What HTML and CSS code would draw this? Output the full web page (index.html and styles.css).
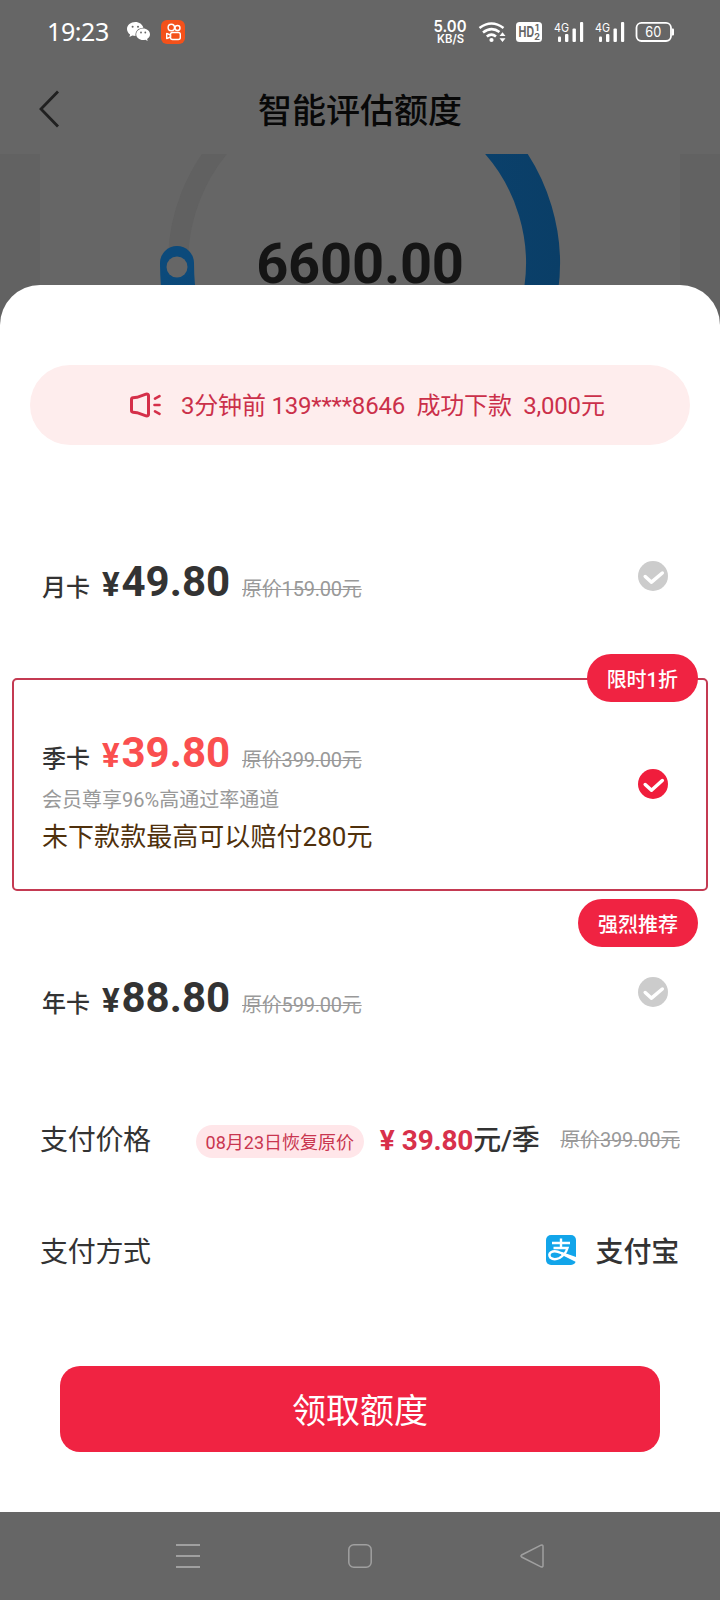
FILE: index.html
```html
<!DOCTYPE html>
<html lang="zh-CN">
<head>
<meta charset="utf-8">
<title>智能评估额度</title>
<link rel="stylesheet" href="styles.css">
</head>
<body>
<div class="screen">
  <header class="status">
    <span class="clock">19:23</span>
    <svg class="wechat" width="24" height="20" viewBox="0 0 24 20">
      <path fill="#fff" d="M8.300 0C3.700 0 0 3.100 0 7c0 2.200 1.200 4.200 3.100 5.500L2.400 15l3-1.500c1 .3 2 .4 3.100.4C8 9 11.500 5.800 16.400 5.700 15.500 2.400 12.200 0 8.300 0z"/>
      <path fill="#fff" d="M23 12.200c0-3.200-3.100-5.800-6.900-5.800s-6.900 2.600-6.900 5.800 3.100 5.800 6.900 5.800c.8 0 1.600-.1 2.300-.3l2.300 1.300-.6-2.100c1.800-1.100 2.900-2.800 2.900-4.700z"/>
      <g fill="#666"><circle cx="5.600" cy="4.800" r="1"/><circle cx="11" cy="4.800" r="1"/><circle cx="14" cy="10.500" r=".9"/><circle cx="18.300" cy="10.500" r=".9"/></g>
    </svg>
    <svg class="kuaishou" width="24" height="24" viewBox="0 0 24 24">
      <rect width="24" height="24" rx="6" fill="#f4511a"/>
      <g fill="none" stroke="#fff" stroke-width="1.400" stroke-linejoin="round"><circle cx="10.300" cy="7.500" r="3.200"/><circle cx="16.500" cy="8" r="2.500"/><rect x="9.500" y="12.500" width="9.800" height="7" rx="2"/><path d="M9.500 15l-3.800-1.600v5.200L9.500 17z"/></g>
    </svg>
    <svg class="signals" width="250" height="30" viewBox="430 16 250 30">
      <g fill="#fff">
        <g class="speed"><text x="433.500" y="32" font-size="16" textLength="33" lengthAdjust="spacingAndGlyphs">5.00</text><text x="437" y="43.300" font-size="12" textLength="27" lengthAdjust="spacingAndGlyphs">KB/S</text></g>
        <g fill="none" stroke="#fff" stroke-width="2.600"><path d="M479.500 28Q491.500 19 503.500 28"/><path d="M483 32.500Q491.500 26 499.500 32"/><path d="M486.800 36.500Q491.500 32.700 496 36.500"/></g>
        <circle cx="491.500" cy="40" r="2.100"/>
        <path d="M499.500 36l3-3.800 3 3.800zM499.500 38.200l3 3.800 3-3.800z"/>
        <rect x="516" y="22" width="26" height="20" rx="3.500"/>
        <g class="hd" fill="#666"><text x="518.500" y="37.300" font-size="14.500" textLength="15.500" lengthAdjust="spacingAndGlyphs">HD</text><text x="535" y="31.300" font-size="9">1</text><text x="534.200" y="39.500" font-size="9">2</text></g>
        <text class="net" x="554" y="31.500" font-size="12" textLength="15" lengthAdjust="spacingAndGlyphs">4G</text>
        <rect x="558" y="36.500" width="3" height="5.500" rx="1"/><rect x="565" y="34" width="3.400" height="8" rx="1"/><rect x="572.500" y="28.500" width="3.400" height="13.500" rx="1"/><rect x="580" y="22" width="3.200" height="20" rx="1"/>
        <text class="net" x="595" y="31.500" font-size="12" textLength="15" lengthAdjust="spacingAndGlyphs">4G</text>
        <rect x="599" y="36.500" width="3" height="5.500" rx="1"/><rect x="606" y="34" width="3.400" height="8" rx="1"/><rect x="613.500" y="28.500" width="3.400" height="13.500" rx="1"/><rect x="621" y="22" width="3.200" height="20" rx="1"/>
        <rect x="636.500" y="22.800" width="34.500" height="18.200" rx="5" fill="none" stroke="#fff" stroke-width="1.800"/>
        <path d="M672 28.500h1q1 0 1 1v5q0 1-1 1h-1z"/>
        <text class="net" x="645.300" y="37" font-size="14" textLength="16" lengthAdjust="spacingAndGlyphs">60</text>
      </g>
    </svg>
  </header>

  <nav class="titlebar">
    <svg class="back" width="24" height="40" viewBox="0 0 24 40"><path d="M20 2.500L3 20 20 37.500" fill="none" stroke="#202020" stroke-width="2.800"/></svg>
    <h1 class="title">智能评估额度</h1>
  </nav>

  <section class="backdrop">
    <div class="gauge-card">
      <svg class="gauge" width="640" height="171" viewBox="40 154 640 171">
        <defs><linearGradient id="arc" gradientUnits="userSpaceOnUse" x1="160" y1="0" x2="560" y2="0"><stop offset="0" stop-color="#0c4a7b"/><stop offset="1" stop-color="#0a3e67"/></linearGradient></defs>
        <circle cx="360" cy="263" r="182" fill="none" stroke="#616161" stroke-width="20"/>
        <path d="M480 125A183 183 0 0 1 536 313" fill="none" stroke="url(#arc)" stroke-width="34"/>
        <path d="M177 263Q177 285 181 310" fill="none" stroke="url(#arc)" stroke-width="34"/>
        <circle cx="177" cy="263" r="17" fill="#0c4a7b"/>
        <circle cx="177" cy="267" r="10.500" fill="#666"/>
      </svg>
      <div class="amount">6600.00</div>
    </div>
  </section>

  <main class="sheet">
    <div class="notice">
      <svg width="34" height="28" viewBox="0 0 34 28"><g fill="none" stroke="#d52f49" stroke-width="3" stroke-linecap="round" stroke-linejoin="round"><path d="M3.500 8.500Q3.500 7 5 6.800L9 6.300L18 3.200Q20.500 2.700 20.500 4.500V23.500Q20.500 25.300 18 24.800L9 21.700L5 21.200Q3.500 21 3.500 19.500Z"/><path stroke-width="2.600" d="M27 7.600l4.500-2.500M26.500 14h5M27 20.400l4.500 2.500"/></g></svg>
      <span class="notice-text">3分钟前 139****8646&nbsp; 成功下款&nbsp; 3,000元</span>
    </div>

    <div class="plans">
      <div class="plan">
        <div class="info"><div class="line"><span class="name">月卡</span><span class="price"><small>¥</small>49.80</span><s class="old">原价159.00元</s></div></div>
        <svg class="check" width="30" height="30" viewBox="0 0 30 30"><circle cx="15" cy="15" r="15" fill="#ccc"/><path d="M7.200 15.500l6.300 5.700L24.300 12" fill="none" stroke="#fff" stroke-width="3.500" stroke-linecap="round" stroke-linejoin="round"/></svg>
      </div>
      <div class="plan selected">
        <span class="badge">限时1折</span>
        <div class="info">
          <div class="line"><span class="name">季卡</span><span class="price"><small>¥</small>39.80</span><s class="old">原价399.00元</s></div>
          <div class="desc">会员尊享96%高通过率通道</div>
          <div class="promise">未下款款最高可以赔付280元</div>
        </div>
        <svg class="check" width="30" height="30" viewBox="0 0 30 30"><circle cx="15" cy="15" r="15" fill="#f01d3c"/><path d="M7.200 15.500l6.300 5.700L24.300 11.500" fill="none" stroke="#fff" stroke-width="3.500" stroke-linecap="round" stroke-linejoin="round"/></svg>
      </div>
      <div class="plan">
        <span class="badge">强烈推荐</span>
        <div class="info"><div class="line"><span class="name">年卡</span><span class="price"><small>¥</small>88.80</span><s class="old">原价599.00元</s></div></div>
        <svg class="check" width="30" height="30" viewBox="0 0 30 30"><circle cx="15" cy="15" r="15" fill="#ccc"/><path d="M7.200 15.500l6.300 5.700L24.300 12" fill="none" stroke="#fff" stroke-width="3.500" stroke-linecap="round" stroke-linejoin="round"/></svg>
      </div>
    </div>

    <div class="row pay-price">
      <span class="row-label">支付价格</span>
      <span class="restore">08月23日恢复原价</span>
      <span class="total"><b><i>¥</i>39.80</b>元/季</span>
      <s class="old">原价399.00元</s>
    </div>
    <div class="row pay-method">
      <span class="row-label">支付方式</span>
      <svg class="alipay" width="30" height="30" viewBox="0 0 30 30">
        <rect width="30" height="30" rx="5" fill="#12a5ea"/>
        <path d="M6 8h18M15 3.500v9.500M7.500 13h14Q19.500 19.500 13.500 23Q8 25.500 4.500 22.800Q2 19.500 5 17.200Q9 15 15 18L29.500 24" fill="none" stroke="#fff" stroke-width="2.400"/>
        <path d="M15 16.800L30 22v5L15 19.500z" fill="#fff"/>
      </svg>
      <span class="method">支付宝</span>
    </div>
    <button class="submit">领取额度</button>
  </main>

  <footer class="navkeys">
    <svg width="26" height="26" viewBox="0 0 26 26"><path d="M1 2h24M1 13h24M1 24h24" stroke="#a0a0a0" stroke-width="1.800"/></svg>
    <svg width="26" height="26" viewBox="0 0 26 26"><rect x="1.800" y="1.800" width="22.400" height="22.400" rx="5" fill="none" stroke="#a0a0a0" stroke-width="1.500"/></svg>
    <svg width="26" height="26" viewBox="0 0 26 26"><path d="M22 2.200L2.600 12q-1.300 1 0 2L22 23.800q2 .6 2-1.300V3.500q0-1.900-2-1.300z" fill="none" stroke="#a0a0a0" stroke-width="1.500"/></svg>
  </footer>
</div>
</body>
</html>
```

FILE: styles.css
```css
* { box-sizing: border-box; }
body { margin: 0; font-family: Roboto, "Noto Sans CJK SC", sans-serif; color: #333; }
svg { display: block; flex: none; }
.screen { width: 720px; height: 1600px; background: #666; display: flex; flex-direction: column; overflow: hidden; }

.status { height: 64px; display: flex; align-items: center; padding-left: 47px; flex: none; }
.clock { font: 25px/30px "Noto Sans", sans-serif; letter-spacing: -0.4px; color: #fff; width: 80px; padding-bottom: 2px; white-space: nowrap; }
.kuaishou { margin-left: 10px; }
.signals { margin: 0 0 2px 245px; font-family: Inter, sans-serif; }
.speed { font-weight: 600; }
.hd { font-weight: 700; }
.net { font-weight: 400; }

.titlebar { height: 90px; flex: none; display: grid; grid-template-columns: 80px 1fr 80px; align-items: center; }
.back { margin-left: 38px; }
.title { margin: 0; padding-top: 4px; font-size: 34px; line-height: 50px; font-weight: 500; color: #080808; text-align: center; }

.backdrop { height: 171px; margin-bottom: -40px; flex: none; background: #626262; padding: 0 40px; }
.gauge-card { height: 171px; background: #666; display: grid; }
.gauge, .amount { grid-area: 1 / 1; }
.amount { font-weight: 700; font-size: 56px; line-height: 66px; letter-spacing: -0.2px; color: #151515; text-align: center; padding-top: 77px; }

.sheet { position: relative; height: 1227px; flex: none; background: #fff; border-radius: 40px 40px 0 0; padding: 80px 0 0; }
.notice { height: 80px; margin: 0 30px; border-radius: 40px; background: #feeded; color: #cb304a; display: flex; align-items: center; padding-left: 98px; }
.notice-text { margin-left: 19px; padding-top: 1px; font-size: 24px; line-height: 36px; letter-spacing: -0.2px; white-space: nowrap; }

.plans { margin: 62px 12px 0; display: flex; flex-direction: column; gap: 32px; }
.plan { position: relative; height: 138px; padding: 0 40px 0 30px; display: flex; align-items: center; justify-content: space-between; }
.plan.selected { height: 213px; margin-top: 1px; border: 2px solid #c43a52; border-radius: 5px; padding: 0 38px 0 28px; }
.selected .check { margin-bottom: 1px; }
.info { padding-top: 18px; }
.line { display: flex; align-items: baseline; line-height: 50px; }
.name { font-size: 24px; font-weight: 500; width: 60px; }
.price { font-size: 42px; font-weight: 700; width: 140px; }
.price small { display: inline-block; width: 19.5px; font-size: 33px; }
.selected .price { color: #fa4f4f; }
.old { font-size: 20px; letter-spacing: -0.2px; color: #999; white-space: nowrap; text-decoration-thickness: 1px; }
.desc { font-size: 20px; line-height: 30px; color: #999; }
.promise { font-size: 26px; line-height: 44px; letter-spacing: 0.05px; color: #4f300c; }
.badge { position: absolute; right: 10px; top: -24px; height: 48px; padding: 1px 20px 0; border-radius: 24px; background: #f02342; color: #fff; font-size: 20px; line-height: 50px; font-weight: 500; }
.selected .badge { right: 8px; top: -26px; }

.row { margin: 0 40px; display: flex; align-items: center; height: 50px; white-space: nowrap; }
.row-label { font-size: 28px; letter-spacing: -0.3px; }
.pay-price { margin-top: 52px; }
.restore { margin: 7px 0 0 45px; width: 168px; height: 33px; border-radius: 17px; background: #ffe6e9; color: #c93650; font-size: 18px; line-height: 35px; text-align: center; }
.total { margin-left: 16px; font-size: 28px; font-weight: 500; letter-spacing: -0.2px; }
.total b { color: #d8314b; font-weight: 700; }
.total i { font-style: normal; display: inline-block; width: 22px; }
.row .old { margin-left: auto; }
.pay-method { margin-top: 62px; }
.alipay { margin-left: auto; }
.method { margin: 0 1px 0 20px; font-size: 28px; font-weight: 500; letter-spacing: -0.2px; }
.submit { display: block; margin: 91px 60px 0; width: 600px; height: 86px; border: 0; padding: 0 0 2px; border-radius: 20px; background: #f02342; color: #fff; font-family: inherit; font-size: 34px; }

.navkeys { height: 88px; flex: none; display: flex; justify-content: space-between; align-items: center; padding: 0 175px; }
```
